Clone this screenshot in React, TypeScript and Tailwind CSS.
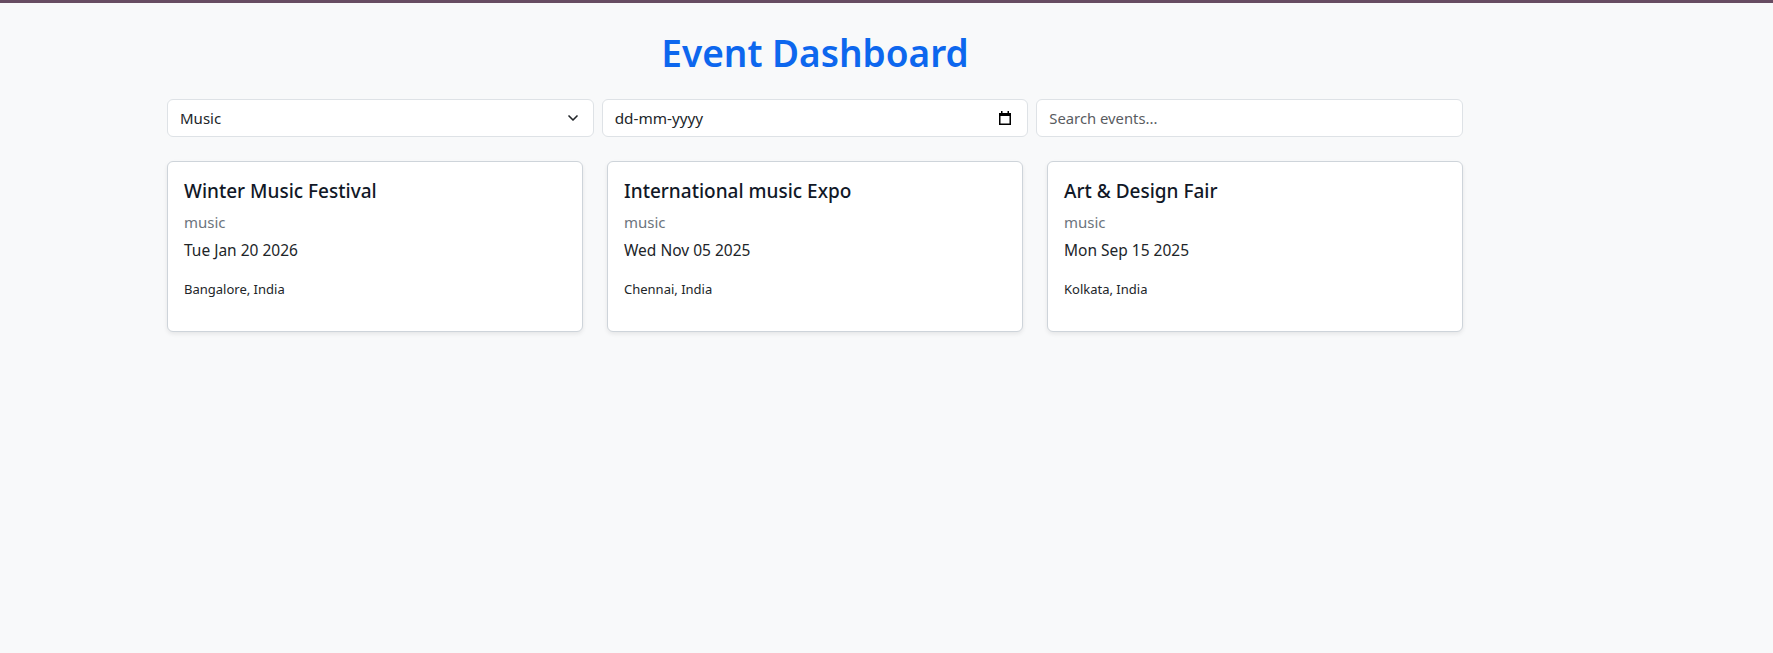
import { ChevronDown } from 'lucide-react'

const events = [
  { title: 'Winter Music Festival', category: 'music', date: 'Tue Jan 20 2026', place: 'Bangalore, India' },
  { title: 'International music Expo', category: 'music', date: 'Wed Nov 05 2025', place: 'Chennai, India' },
  { title: 'Art & Design Fair', category: 'music', date: 'Mon Sep 15 2025', place: 'Kolkata, India' },
]

function CalendarGlyph() {
  return (
    <svg width="14" height="16" viewBox="0 0 14 16" className="shrink-0">
      <path d="M1 3h12v12H1z M2.5 6v7.5h9V6z" fill="#000" fillRule="evenodd" />
      <rect x="3" y="1" width="1.5" height="2.5" fill="#000" />
      <rect x="9.5" y="1" width="1.5" height="2.5" fill="#000" />
    </svg>
  )
}

export default function App() {
  return (
    <div className="min-h-[653px] bg-[#f8f9fa] border-t-[3px] border-[#674c62] font-['Noto_Sans','Open_Sans',sans-serif] text-[#212529]">
      <div className="ml-[167px] w-[1296px]">
        <h1 className="mt-[21px] text-center text-[37px] leading-[58px] font-semibold text-[#0d67ee]">Event Dashboard</h1>

        <div className="mt-[17px] grid grid-cols-3 gap-[8px]">
          <div className="flex h-[38px] items-center justify-between rounded-md border border-[#dee2e6] bg-white pl-[12px] pr-[12px] text-[15px]">
            <span>Music</span>
            <ChevronDown size={16} strokeWidth={2.5} className="text-[#212529]" />
          </div>
          <div className="flex h-[38px] items-center justify-between rounded-md border border-[#dee2e6] bg-white pl-[12px] pr-[15px] text-[15.3px]">
            <span>dd-mm-yyyy</span>
            <CalendarGlyph />
          </div>
          <input
            placeholder="Search events..."
            className="h-[38px] rounded-md border border-[#dee2e6] bg-white px-[12px] text-[14.8px] outline-none placeholder:text-[#595c5f]"
          />
        </div>

        <div className="mt-[24px] grid grid-cols-3 gap-[24px]">
          {events.map((event) => (
            <div
              key={event.title}
              className="h-[171px] rounded-md border border-[#ced4da] bg-white px-[16px] pt-[17px] shadow-[0_2px_4px_rgba(0,0,0,0.08)]"
            >
              <h5 className="text-[19px] leading-[24px] font-medium text-[#111827]">{event.title}</h5>
              <p className="mt-[8px] text-[15px] leading-[22px] text-[#6c757d]">{event.category}</p>
              <p className="mt-[6px] text-[15.5px] leading-[22px]">{event.date}</p>
              <p className="mt-[18px] text-[13px] leading-[20px]">{event.place}</p>
            </div>
          ))}
        </div>
      </div>
    </div>
  )
}
